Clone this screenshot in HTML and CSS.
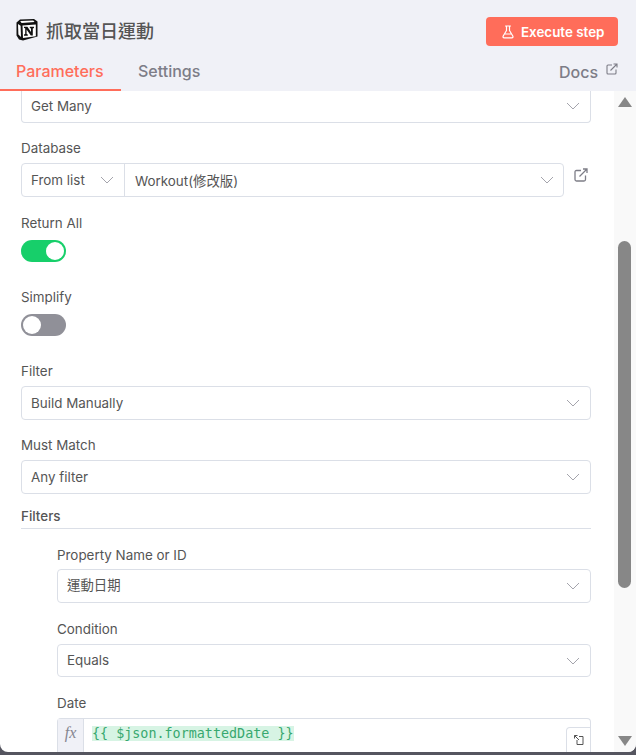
FILE: index.html
```html
<!DOCTYPE html>
<html lang="zh-Hant">
<head>
  <meta charset="UTF-8">
  <title>抓取當日運動</title>
  <link rel="stylesheet" href="styles.css">
</head>
<body>
  <div class="panel">
    <div class="header">
      <div class="title-row">
        <div class="title">
          <svg class="notion-icon" width="22" height="22" viewBox="0 0 22 22">
            <path d="M4 .5 L18 0 L21.5 2.5 V17.5 L7 21.5 L3 20.5 L.5 16.5 V3.5 Z" fill="#111"/>
            <path d="M4.2 2 L17.2 1.4 L18.6 3 L5.6 4 Z" fill="#fff"/>
            <path d="M2 5 L4.6 6.8 L5 18 L2.4 15.6 Z" fill="#fff"/>
            <path d="M6.5 6.4 L19.8 5.4 V17.2 L7 19 Z" fill="#fff"/>
            <path d="M8 7.8 H11.4 L15 13 V9.4 L13.8 9 V7.8 H18 V9 L16.8 9.4 V16.6 H14.8 L10.6 10.6 V15 L11.8 15.4 V16.8 H8 V15.4 L9.2 15 V9.2 L8 9 Z" fill="#111"/>
          </svg>
          <span class="title-text">抓取當日運動</span>
        </div>
        <button class="execute-btn">
          <svg width="14" height="14" viewBox="0 0 14 14" fill="none" stroke="#fff" stroke-width="1.2" stroke-linejoin="round" stroke-linecap="round">
            <path d="M4.5 1 H9.5 M5.5 1 V5.5 L2.2 11 Q1.6 12.8 3.2 12.8 H10.8 Q12.4 12.8 11.8 11 L8.5 5.5 V1 M3.8 9 H10.2"/>
          </svg>
          Execute step
        </button>
      </div>
      <div class="tabs">
        <div class="tab active">Parameters</div>
        <div class="tab">Settings</div>
        <div class="docs">Docs
          <svg width="12" height="12" viewBox="0 0 12 12" fill="none" stroke="#7d7d87" stroke-width="1.1">
            <path d="M6 2 H2 Q1 2 1 3 V10 Q1 11 2 11 H9 Q10 11 10 10 V6.5"/>
            <path d="M4.5 7.5 L11 1 M7.5 1 H11 V4.5"/>
          </svg>
        </div>
      </div>
    </div>

    <div class="body">
      <div class="form">
        <div class="select first">Get Many<svg class="chev" viewBox="0 0 14 8"><path d="M1 1 L7 7 L13 1"/></svg></div>

        <label class="lbl db-lbl">Database</label>
        <div class="db-row">
          <div class="db-group">
            <div class="db-mode">From list<svg class="chev" viewBox="0 0 14 8"><path d="M1 1 L7 7 L13 1"/></svg></div>
            <div class="db-value">Workout(修改版)<svg class="chev" viewBox="0 0 14 8"><path d="M1 1 L7 7 L13 1"/></svg></div>
          </div>
          <svg class="open-link" width="14" height="14" viewBox="0 0 14 14" fill="none" stroke="#7d7d87" stroke-width="1.3">
            <path d="M7 2.5 H2.5 Q1 2.5 1 4 V11.5 Q1 13 2.5 13 H10 Q11.5 13 11.5 11.5 V7.5"/>
            <path d="M5.5 8.5 L13 1 M9 1 H13 V5"/>
          </svg>
        </div>

        <label class="lbl toggle-lbl">Return All</label>
        <div class="toggle on"><span class="knob"></span></div>

        <label class="lbl toggle-lbl simplify">Simplify</label>
        <div class="toggle"><span class="knob"></span></div>

        <label class="lbl filter-lbl">Filter</label>
        <div class="select">Build Manually<svg class="chev" viewBox="0 0 14 8"><path d="M1 1 L7 7 L13 1"/></svg></div>

        <label class="lbl match-lbl">Must Match</label>
        <div class="select">Any filter<svg class="chev" viewBox="0 0 14 8"><path d="M1 1 L7 7 L13 1"/></svg></div>

        <div class="section-title">Filters</div>

        <div class="nested">
          <label class="lbl prop-lbl">Property Name or ID</label>
          <div class="select"><span class="cjk-text">運動日期</span><svg class="chev" viewBox="0 0 14 8"><path d="M1 1 L7 7 L13 1"/></svg></div>

          <label class="lbl cond-lbl">Condition</label>
          <div class="select cond-select"><span class="cond-text">Equals</span><svg class="chev" viewBox="0 0 14 8"><path d="M1 1 L7 7 L13 1"/></svg></div>

          <label class="lbl cond-lbl">Date</label>
          <div class="expr">
            <div class="fx">fx</div>
            <div class="expr-value"><span class="code">{{ $json.formattedDate }}</span></div>
            <div class="expand">
              <svg width="12" height="12" viewBox="0 0 12 12" fill="none" stroke="#555" stroke-width="1">
                <path d="M1.5 1.5 L6 6 M1.5 1.5 H4.5 M1.5 1.5 V4.5"/>
                <path d="M6 2.5 H10 V10.5 H4 V6"/>
              </svg>
            </div>
          </div>
        </div>
      </div>

      <div class="scrollbar">
        <span class="arrow-up"></span>
        <div class="track"><div class="thumb"></div></div>
        <span class="arrow-down"></span>
      </div>
    </div>
  </div>
</body>
</html>
```

FILE: styles.css
```css
html, body { height: 100%; }
body {
  margin: 0;
  background-color: #55555f;
  font-family: Inter, "Noto Sans CJK TC", sans-serif;
  color: #555;
  overflow: hidden;
}
.panel {
  height: 752px; display: flex; flex-direction: column;
  background-color: #fff; border-radius: 0 0 8px 8px; overflow: hidden;
}
.header { background-color: #f0f1f7; height: 91px; box-sizing: border-box; flex: none; }
.title-row {
  display: flex; justify-content: space-between; align-items: flex-start;
  padding: 17px 18px 0 16px; height: 58px; box-sizing: border-box;
}
.title { display: flex; align-items: center; gap: 8px; height: 26px; }
.title-text { font-size: 18px; font-weight: 500; color: #555; }
.execute-btn {
  display: flex; align-items: center; gap: 6px;
  width: 132px; height: 29px; padding: 0 0 0 15px;
  background-color: #ff6d5a; border: none; border-radius: 4px;
  color: #fff; font-family: inherit; font-size: 13.4px; font-weight: 600;
}
.tabs { display: flex; align-items: flex-end; height: 33px; }
.tab {
  font-size: 16px; font-weight: 500; color: #7d7d87;
  padding: 0 18px 0 17px; height: 33px; line-height: 27px; box-sizing: border-box;
}
.tab.active {
  color: #ff6d5a; border-bottom: 2px solid #ff6d5a;
  width: 121px; padding: 0 0 0 16px;
}
.docs {
  margin-left: auto; padding-right: 18px; height: 33px; line-height: 29px;
  font-size: 16px; font-weight: 500; color: #7d7d87;
  display: flex; gap: 8px;
}
.docs svg { margin-top: 5px; }

.body { flex: 1; display: flex; min-height: 0; }
.form { flex: 1; padding: 0 23px 0 21px; min-width: 0; }
.lbl { display: block; font-size: 13.4px; line-height: 18px; color: #555; margin-bottom: 6px; }
.select {
  display: flex; align-items: center; justify-content: space-between;
  height: 34px; box-sizing: border-box; padding: 0 10px 0 9px;
  background-color: #fff; border: 1px solid #dbdfe7; border-radius: 4px;
  font-size: 13.4px; color: #555;
}
.select.first { height: 32px; padding-bottom: 2px; border-top: none; border-radius: 0 0 4px 4px; }
.cond-select { height: 33px; }
.cond-text { margin-bottom: 2px; }
.cjk-text { margin-bottom: 4px; }
.chev { width: 14px; height: 8px; fill: none; stroke: #9a9aa3; stroke-width: .9; flex: none; }

.db-lbl { margin-top: 16px; }
.db-row { display: flex; align-items: flex-start; gap: 10px; }
.db-group {
  flex: 1; display: flex; height: 34px; box-sizing: border-box;
  border: 1px solid #dbdfe7; border-radius: 4px; font-size: 13.4px;
}
.db-mode {
  width: 103px; box-sizing: border-box; padding: 0 10px 0 9px; flex: none;
  display: flex; align-items: center; justify-content: space-between;
  border-right: 1px solid #dbdfe7;
}
.db-value {
  flex: 1; display: flex; align-items: center; justify-content: space-between;
  padding: 0 9px 0 10px;
}
.open-link { margin-top: 5px; margin-right: 3px; flex: none; }

.toggle-lbl { margin-top: 17px; margin-bottom: 8px; }
.simplify { margin-top: 26px; }
.toggle {
  width: 45px; height: 22px; box-sizing: border-box; padding: 2px;
  background-color: #909098; border-radius: 11px;
}
.toggle.on { background-color: #17cf6a; padding-left: 25px; }
.knob { display: block; width: 18px; height: 18px; background-color: #fff; border-radius: 50%; }
.filter-lbl { margin-top: 26px; }
.match-lbl { margin-top: 16px; }
.section-title {
  margin-top: 14px; height: 20px; font-size: 13.4px; font-weight: 500; line-height: 17px;
  color: #555; border-bottom: 1px solid #dbdfe7;
}
.nested { padding: 17px 0 0 36px; }
.prop-lbl { margin-bottom: 5px; }
.cond-lbl { margin-top: 17px; }

.expr {
  display: flex; height: 34px; border: 1px solid #dbdfe7; border-bottom: none; border-radius: 4px 4px 0 0;
  box-sizing: border-box; position: relative;
}
.fx {
  width: 25px; flex: none; background-color: #f0f1f7; border-right: 1px solid #dbdfe7;
  font-family: "Liberation Serif", serif; font-style: italic; font-size: 16px; color: #85858f;
  text-align: center; line-height: 28px;
}
.expr-value { flex: 1; padding: 7px 8px; }
.code {
  display: block; width: fit-content;
  font-family: "DejaVu Sans Mono", monospace; font-size: 13.4px; line-height: 15px;
  color: #37a86f; background-color: #d7f4e4;
}
.expand {
  position: absolute; right: -1px; bottom: 0; width: 25px; height: 25px; box-sizing: border-box;
  border: 1px solid #dbdfe7; border-bottom: none; border-radius: 4px 0 0 0; background-color: #fff;
  display: flex; align-items: center; justify-content: center;
}

.scrollbar {
  width: 22px; flex: none; box-sizing: border-box; padding-right: 1px; background-color: #f9f9f9;
  display: flex; flex-direction: column; align-items: center;
}
.arrow-up, .arrow-down { width: 0; height: 0; border-left: 7.5px solid transparent; border-right: 7.5px solid transparent; flex: none; }
.arrow-up { border-bottom: 10px solid #878787; margin-top: 6px; }
.arrow-down { border-top: 10px solid #878787; margin-bottom: 6px; }
.track { flex: 1; width: 100%; }
.thumb { width: 13px; height: 347px; margin: 134px auto 0; background-color: #878787; border-radius: 7px; }
```
